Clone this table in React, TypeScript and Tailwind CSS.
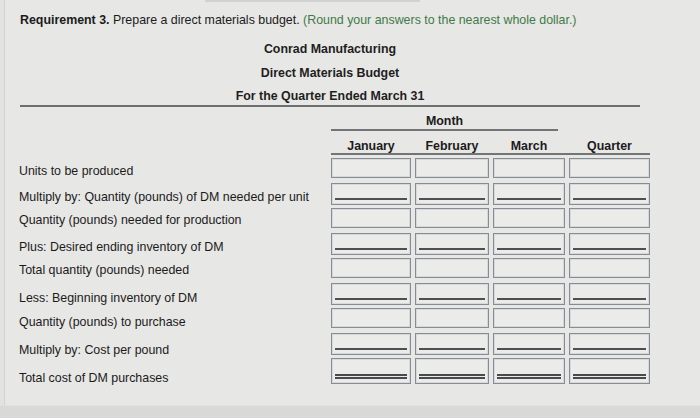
import React from "react";

type Row = { label: string; u: 0 | 1 | 2; lp: string };

const rows: Row[] = [
  { label: "Units to be produced", u: 0, lp: "pt-[6px]" },
  { label: "Multiply by: Quantity (pounds) of DM needed per unit", u: 1, lp: "pt-[7px]" },
  { label: "Quantity (pounds) needed for production", u: 0, lp: "pt-[5px]" },
  { label: "Plus: Desired ending inventory of DM", u: 1, lp: "pt-[7px]" },
  { label: "Total quantity (pounds) needed", u: 0, lp: "pt-[5px]" },
  { label: "Less: Beginning inventory of DM", u: 1, lp: "pt-[8px]" },
  { label: "Quantity (pounds) to purchase", u: 0, lp: "pt-[7px]" },
  { label: "Multiply by: Cost per pound", u: 1, lp: "pt-[10px]" },
  { label: "Total cost of DM purchases", u: 2, lp: "pt-[13px]" },
];

const widths = ["w-[80px]", "w-[74px]", "w-[72px]", "w-[81px]"];

function Box({ w, u }: { w: string; u: 0 | 1 | 2 }) {
  const h = u === 0 ? "h-[20px]" : u === 1 ? "h-[22px]" : "h-[26px]";
  return (
    <div
      className={`${w} ${h} border border-[#858c93] bg-[#ebebe9] flex flex-col justify-end px-[3px] pb-[4px] shadow-[inset_0_0_0_1px_#d6d8da]`}
    >
      {u === 1 && <div className="h-[2px] bg-[#4f4f51]" />}
      {u === 2 && <div className="h-[5px] border-t-2 border-b-2 border-[#4a4a4c]" />}
    </div>
  );
}

export default function App() {
  return (
    <div className="w-[700px] h-[418px] bg-[#e7e7e5] flex flex-col overflow-hidden font-['Liberation_Sans',Arial,sans-serif] text-[12.4px] text-[#1b1b1b]">
      <div className="flex-1 flex">
        <div className="w-[4px] bg-[#e2e2e0]" />
        <div className="flex-1 border-l border-[#d3d3d1] flex flex-col">
          <div className="ml-[200px] w-[215px] h-[2px] bg-[#d2d2d0]" />
          <div className="mt-[11px] pl-[15px] leading-[14px] whitespace-nowrap">
            <span className="font-bold">Requirement 3.</span> Prepare a direct materials budget.{" "}
            <span className="text-[#3f7a47]">(Round your answers to the nearest whole dollar.)</span>
          </div>
          <div className="ml-[15px] w-[620px] flex flex-col items-center font-bold leading-[14px] text-[#1e1e1e]">
            <div className="mt-[15px]">Conrad Manufacturing</div>
            <div className="mt-[10px]">Direct Materials Budget</div>
            <div className="mt-[9px]">For the Quarter Ended March 31</div>
          </div>
          <div className="ml-[15px] w-[620px] mt-[2px] h-[2px] bg-[#6e6e6e]" />

          <div className="pl-[14px] flex flex-col">
            <div className="flex mt-[7px]">
              <div className="w-[312px]" />
              <div className="w-[227px] flex flex-col">
                <div className="h-[15px] leading-[14px] text-center font-bold">Month</div>
                <div className="h-[2px] bg-[#747474]" />
              </div>
            </div>
            <div className="flex mt-[8px]">
              <div className="w-[312px]" />
              <div className="flex flex-col">
                <div className="flex gap-[4px] h-[14px] leading-[14px] font-bold">
                  <div className="w-[80px] text-center">January</div>
                  <div className="w-[74px] text-center">February</div>
                  <div className="w-[72px] text-center">March</div>
                  <div className="w-[81px] text-center">Quarter</div>
                </div>
                <div className="h-[2px] bg-[#747474]" />
              </div>
            </div>
            <div className="mt-[3px] flex flex-col">
              {rows.map((r, i) => (
                <div key={i} className={`flex ${r.u === 2 ? "h-[27px]" : "h-[25px]"}`}>
                  <div className={`w-[312px] leading-[14px] whitespace-nowrap ${r.lp}`}>{r.label}</div>
                  <div className="flex gap-[4px] items-start">
                    {widths.map((w, j) => (
                      <Box key={j} w={w} u={r.u} />
                    ))}
                  </div>
                </div>
              ))}
            </div>
          </div>
        </div>
      </div>
      <div className="h-[13px] bg-[#d9d9d7] border-t border-[#e0e0de]" />
    </div>
  );
}
